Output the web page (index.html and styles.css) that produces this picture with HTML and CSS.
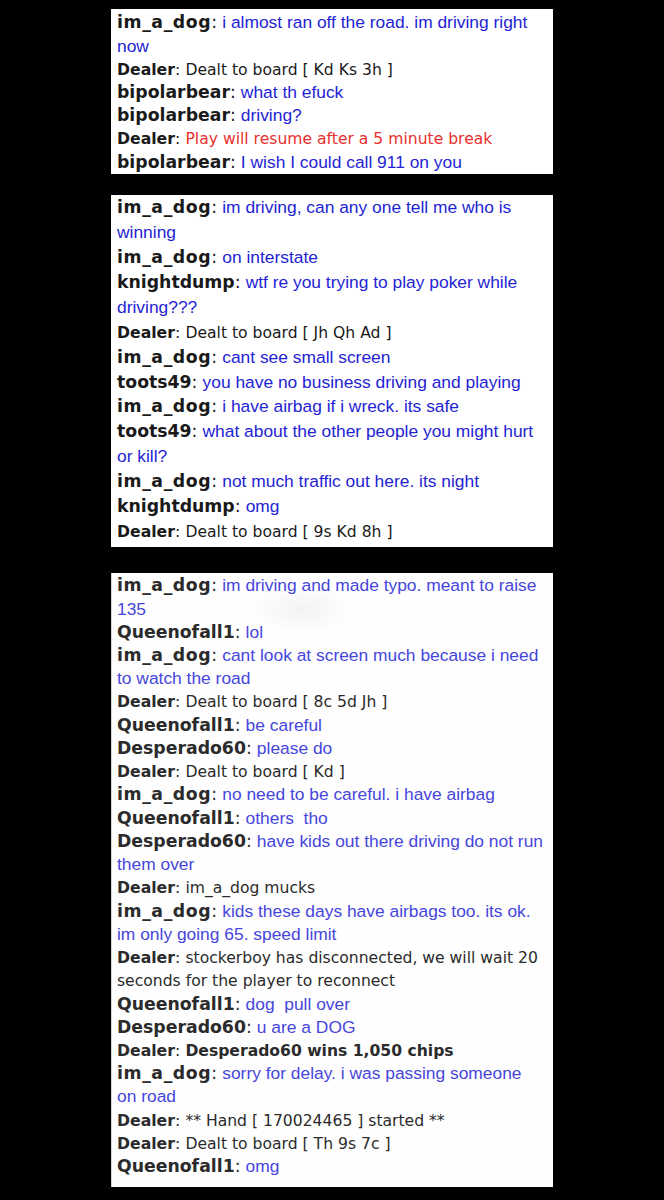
FILE: index.html
```html
<!DOCTYPE html>
<html>
<head>
<meta charset="utf-8">
<link rel="stylesheet" href="styles.css">
</head>
<body>
<div class="page">
  <div class="panel p1">
    <div class="line"><span class="nick dog">im_a_dog</span><span class="colon">:</span> <span class="msg">i almost ran off the road. im driving right<br>now</span></div>
    <div class="line"><span class="dnick">Dealer</span><span class="dcolon">:</span> <span class="dmsg">Dealt to board [ Kd Ks 3h ]</span></div>
    <div class="line"><span class="nick">bipolarbear</span><span class="colon">:</span> <span class="msg">what th efuck</span></div>
    <div class="line"><span class="nick">bipolarbear</span><span class="colon">:</span> <span class="msg">driving?</span></div>
    <div class="line"><span class="dnick">Dealer</span><span class="dcolon">:</span> <span class="dmsg red">Play will resume after a 5 minute break</span></div>
    <div class="line"><span class="nick">bipolarbear</span><span class="colon">:</span> <span class="msg">I wish I could call 911 on you</span></div>
  </div>

  <div class="panel p2">
    <div class="line"><span class="nick dog">im_a_dog</span><span class="colon">:</span> <span class="msg">im driving, can any one tell me who is<br>winning</span></div>
    <div class="line"><span class="nick dog">im_a_dog</span><span class="colon">:</span> <span class="msg">on interstate</span></div>
    <div class="line"><span class="nick">knightdump</span><span class="colon">:</span> <span class="msg">wtf re you trying to play poker while<br>driving???</span></div>
    <div class="line"><span class="dnick">Dealer</span><span class="dcolon">:</span> <span class="dmsg">Dealt to board [ Jh Qh Ad ]</span></div>
    <div class="line"><span class="nick dog">im_a_dog</span><span class="colon">:</span> <span class="msg">cant see small screen</span></div>
    <div class="line"><span class="nick">toots49</span><span class="colon">:</span> <span class="msg">you have no business driving and playing</span></div>
    <div class="line"><span class="nick dog">im_a_dog</span><span class="colon">:</span> <span class="msg">i have airbag if i wreck. its safe</span></div>
    <div class="line"><span class="nick">toots49</span><span class="colon">:</span> <span class="msg">what about the other people you might hurt<br>or kill?</span></div>
    <div class="line"><span class="nick dog">im_a_dog</span><span class="colon">:</span> <span class="msg">not much traffic out here. its night</span></div>
    <div class="line"><span class="nick">knightdump</span><span class="colon">:</span> <span class="msg">omg</span></div>
    <div class="line"><span class="dnick">Dealer</span><span class="dcolon">:</span> <span class="dmsg">Dealt to board [ 9s Kd 8h ]</span></div>
  </div>

  <div class="panel p3">
    <div class="line"><span class="nick dog">im_a_dog</span><span class="colon">:</span> <span class="msg">im driving and made typo. meant to raise<br>135</span></div>
    <div class="line"><span class="nick">Queenofall1</span><span class="colon">:</span> <span class="msg">lol</span></div>
    <div class="line"><span class="nick dog">im_a_dog</span><span class="colon">:</span> <span class="msg">cant look at screen much because i need<br>to watch the road</span></div>
    <div class="line"><span class="dnick">Dealer</span><span class="dcolon">:</span> <span class="dmsg">Dealt to board [ 8c 5d Jh ]</span></div>
    <div class="line"><span class="nick">Queenofall1</span><span class="colon">:</span> <span class="msg">be careful</span></div>
    <div class="line"><span class="nick">Desperado60</span><span class="colon">:</span> <span class="msg">please do</span></div>
    <div class="line"><span class="dnick">Dealer</span><span class="dcolon">:</span> <span class="dmsg">Dealt to board [ Kd ]</span></div>
    <div class="line"><span class="nick dog">im_a_dog</span><span class="colon">:</span> <span class="msg">no need to be careful. i have airbag</span></div>
    <div class="line"><span class="nick">Queenofall1</span><span class="colon">:</span> <span class="msg">others&nbsp; tho</span></div>
    <div class="line"><span class="nick">Desperado60</span><span class="colon">:</span> <span class="msg">have kids out there driving do not run<br>them over</span></div>
    <div class="line"><span class="dnick">Dealer</span><span class="dcolon">:</span> <span class="dmsg">im_a_dog mucks</span></div>
    <div class="line"><span class="nick dog">im_a_dog</span><span class="colon">:</span> <span class="msg">kids these days have airbags too. its ok.<br>im only going 65. speed limit</span></div>
    <div class="line"><span class="dnick">Dealer</span><span class="dcolon">:</span> <span class="dmsg">stockerboy has disconnected, we will wait 20<br>seconds for the player to reconnect</span></div>
    <div class="line"><span class="nick">Queenofall1</span><span class="colon">:</span> <span class="msg">dog&nbsp; pull over</span></div>
    <div class="line"><span class="nick">Desperado60</span><span class="colon">:</span> <span class="msg">u are a DOG</span></div>
    <div class="line"><span class="dnick">Dealer</span><span class="dcolon">:</span> <span class="dmsg strong">Desperado60 wins 1,050 chips</span></div>
    <div class="line"><span class="nick dog">im_a_dog</span><span class="colon">:</span> <span class="msg">sorry for delay. i was passing someone<br>on road</span></div>
    <div class="line"><span class="dnick">Dealer</span><span class="dcolon">:</span> <span class="dmsg">** Hand [ 170024465 ] started **</span></div>
    <div class="line"><span class="dnick">Dealer</span><span class="dcolon">:</span> <span class="dmsg">Dealt to board [ Th 9s 7c ]</span></div>
    <div class="line"><span class="nick">Queenofall1</span><span class="colon">:</span> <span class="msg">omg</span></div>
  </div>
</div>
</body>
</html>
```

FILE: styles.css
```css
html, body {
  margin: 0;
  padding: 0;
  background: #000;
}

.page {
  padding: 9px 0 0 111px;
  display: flex;
  flex-direction: column;
  align-items: flex-start;
}

.panel {
  width: 442px;
  box-sizing: border-box;
  background: #fff;
  padding: 0 4px 0 6px;
  font-family: "DejaVu Sans", Verdana, sans-serif;
  font-size: 16px;
  color: #1a1a1a;
}

.p1 {
  padding-top: 2.4px;
  padding-bottom: 0.4px;
  margin-bottom: 21px;
}
.p1 .line { line-height: 23.2px; }

.p2 {
  padding-top: 1px;
  padding-bottom: 2px;
  margin-bottom: 26px;
}
.p2 .line { line-height: 24.9px; }

.p3 {
  padding-top: 1.4px;
  padding-bottom: 8.4px;
  background:
    radial-gradient(ellipse 50px 24px at 190px 36px, #f3f3f3 0%, rgba(255,255,255,0) 100%),
    #fefefe;
  border-left: 1px solid #d4d4d4;
  padding-left: 5px;
  color: #2b2b2b;
}
.p3 .line { line-height: 23.24px; }

.line span { line-height: 1; }

.nick {
  font-family: "DejaVu Sans", Verdana, sans-serif;
  font-weight: bold;
  font-size: 17.3px;
}

.nick.dog { letter-spacing: 0.6px; }

.colon {
  font-family: "DejaVu Sans", Verdana, sans-serif;
  font-size: 17.3px;
}

.msg {
  font-family: "Liberation Sans", Arial, sans-serif;
  font-size: 17.4px;
  color: #2424d4;
}

.p3 .msg { color: #4646dc; }

.dnick {
  font-family: "DejaVu Sans", Verdana, sans-serif;
  font-weight: bold;
  font-size: 15.7px;
}

.dcolon {
  font-family: "DejaVu Sans", Verdana, sans-serif;
  font-size: 15.7px;
}

.dmsg {
  font-family: "DejaVu Sans", Verdana, sans-serif;
  font-size: 15.6px;
}

.dmsg.red { color: #e8302e; }
.dmsg.strong { font-weight: bold; }
```
